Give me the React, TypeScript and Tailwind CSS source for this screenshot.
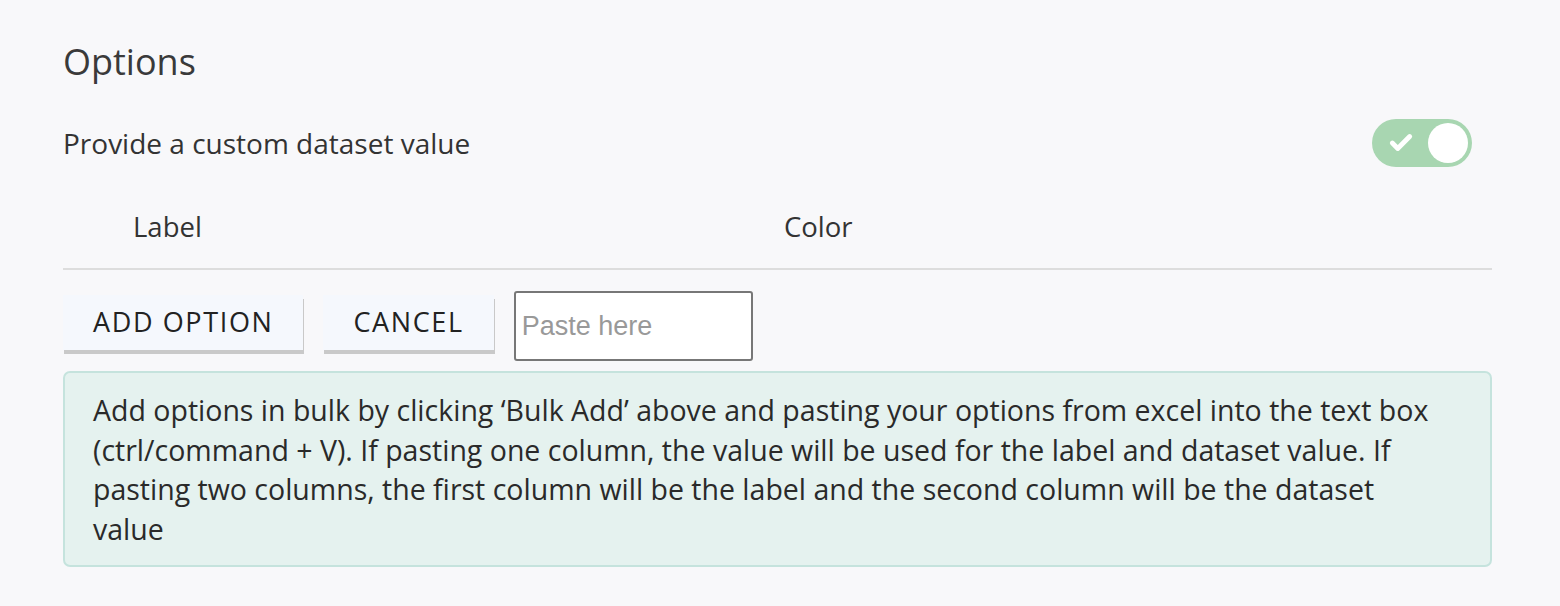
import { Check } from "lucide-react";

const font = "font-['Open_Sans',sans-serif]";

function Toggle() {
  return (
    <div className="mr-[20px] flex h-12 w-[100px] items-center justify-between rounded-full bg-[#a8d6b1] pl-[16px] pr-1">
      <Check className="h-[26px] w-[26px] text-white" strokeWidth={4.5} />
      <span className="h-10 w-10 rounded-full bg-white" />
    </div>
  );
}

function FlatButton({ children }: { children: React.ReactNode }) {
  return (
    <button className="mt-[4px] flex h-[55px] items-center bg-[#f5f8fd] px-[30px] text-[27px] tracking-[0.06em] text-[#222] shadow-[1px_4px_0_#c9c9c9]">
      {children}
    </button>
  );
}

export default function App() {
  return (
    <div className={`min-h-[606px] w-full bg-[#f8f8fa] ${font} text-[#333]`}>
      <div className="ml-[63px] mr-[68px] pt-[37px]">
        <h2 className="text-[36px] leading-[50px] text-[#3a3a3a]">Options</h2>

        <div className="mt-[32px] flex items-center justify-between">
          <span className="text-[28px] text-[#333]">Provide a custom dataset value</span>
          <Toggle />
        </div>

        <div className="mt-[40px] grid grid-cols-[721px_1fr] border-b-2 border-[#dddddd] pb-[21px] text-[27.5px] leading-[40px]">
          <span className="pl-[70px]">Label</span>
          <span>Color</span>
        </div>

        <div className="mt-[21px] flex items-start gap-[20px]">
          <FlatButton>ADD OPTION</FlatButton>
          <FlatButton>CANCEL</FlatButton>
          <input
            className="h-[70px] w-[239px] rounded-[3px] border-2 border-[#777] bg-white px-[6px] font-['Liberation_Sans',sans-serif] text-[27px] text-[#222] outline-none placeholder:text-[#999]"
            placeholder="Paste here"
          />
        </div>

        <div className="mt-[10px] rounded-[7px] border-2 border-[#c5e3dd] bg-[#e5f2ef] pb-[16px] pl-[28px] pr-[40px] pt-[18px] text-[28.5px] leading-[39.5px] text-[#2a2a2a]">
          Add options in bulk by clicking ‘Bulk Add’ above and pasting your options from excel into the text box (ctrl/command + V). If pasting one column, the value will be used for the label and dataset value. If pasting two columns, the first column will be the label and the second column will be the dataset value
        </div>
      </div>
    </div>
  );
}
